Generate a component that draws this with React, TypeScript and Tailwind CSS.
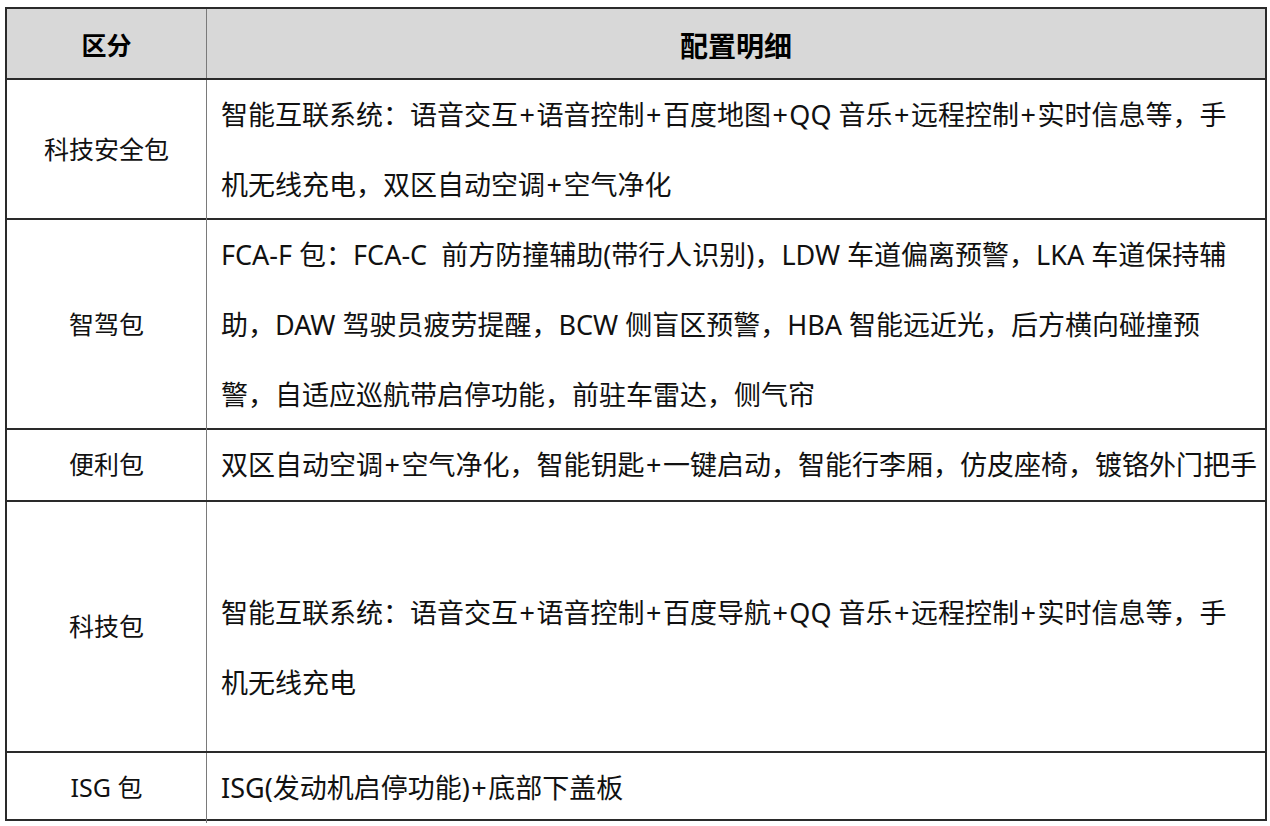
const rows: { label: string; lines: string[]; height: string; pad?: string }[] = [
  {
    label: "科技安全包",
    lines: [
      "智能互联系统：语音交互+语音控制+百度地图+QQ 音乐+远程控制+实时信息等，手",
      "机无线充电，双区自动空调+空气净化",
    ],
    height: "h-[140px]",
  },
  {
    label: "智驾包",
    lines: [
      "FCA-F 包：FCA-C  前方防撞辅助(带行人识别)，LDW 车道偏离预警，LKA 车道保持辅",
      "助，DAW 驾驶员疲劳提醒，BCW 侧盲区预警，HBA 智能远近光，后方横向碰撞预",
      "警，自适应巡航带启停功能，前驻车雷达，侧气帘",
    ],
    height: "h-[210px]",
  },
  {
    label: "便利包",
    lines: ["双区自动空调+空气净化，智能钥匙+一键启动，智能行李厢，仿皮座椅，镀铬外门把手"],
    height: "h-[72px]",
  },
  {
    label: "科技包",
    lines: [
      "智能互联系统：语音交互+语音控制+百度导航+QQ 音乐+远程控制+实时信息等，手",
      "机无线充电",
    ],
    height: "h-[251px]",
    pad: "pt-[42px]",
  },
  {
    label: "ISG 包",
    lines: ["ISG(发动机启停功能)+底部下盖板"],
    height: "h-[68px]",
  },
];

// the source font draws "+" wider than Noto Sans does
function Detail({ text }: { text: string }) {
  const parts = text.split("+");
  return (
    <>
      {parts.map((part, i) => (
        <span key={i}>
          {part}
          {i < parts.length - 1 && <span className="mx-[1.5px]">+</span>}
        </span>
      ))}
    </>
  );
}

export default function App() {
  return (
    <div
      className="min-h-[826px] w-[1270px] bg-white pl-[5px] pt-[7px] text-[#111]"
      style={{ fontFamily: '"Noto Sans", "Noto Sans CJK SC", sans-serif' }}
    >
      <div className="w-[1262px] border-2 border-b-0 border-[#2a2a2a]">
        <div className="grid h-[71px] grid-cols-[200px_1fr] border-b-2 border-[#2a2a2a] bg-[#d8d8d8]">
          <div className="flex items-center justify-center border-r border-[#7a7a7a] pt-[4px] text-[25px] font-bold text-black">
            区分
          </div>
          <div className="flex items-center justify-center pt-[4px] text-[28px] font-bold text-black">
            配置明细
          </div>
        </div>
        {rows.map((row) => (
          <div
            key={row.label}
            className={`grid grid-cols-[200px_1fr] border-b-2 border-[#2a2a2a] ${row.height}`}
          >
            <div className="flex items-center justify-center border-r border-[#7a7a7a] text-[25px]">
              {row.label}
            </div>
            <div
              className={`flex flex-col justify-center pl-[14px] text-[27px] leading-[70px] ${row.pad ?? ""}`}
            >
              {row.lines.map((line) => (
                <div key={line} className="whitespace-pre">
                  <Detail text={line} />
                </div>
              ))}
            </div>
          </div>
        ))}
      </div>
    </div>
  );
}
